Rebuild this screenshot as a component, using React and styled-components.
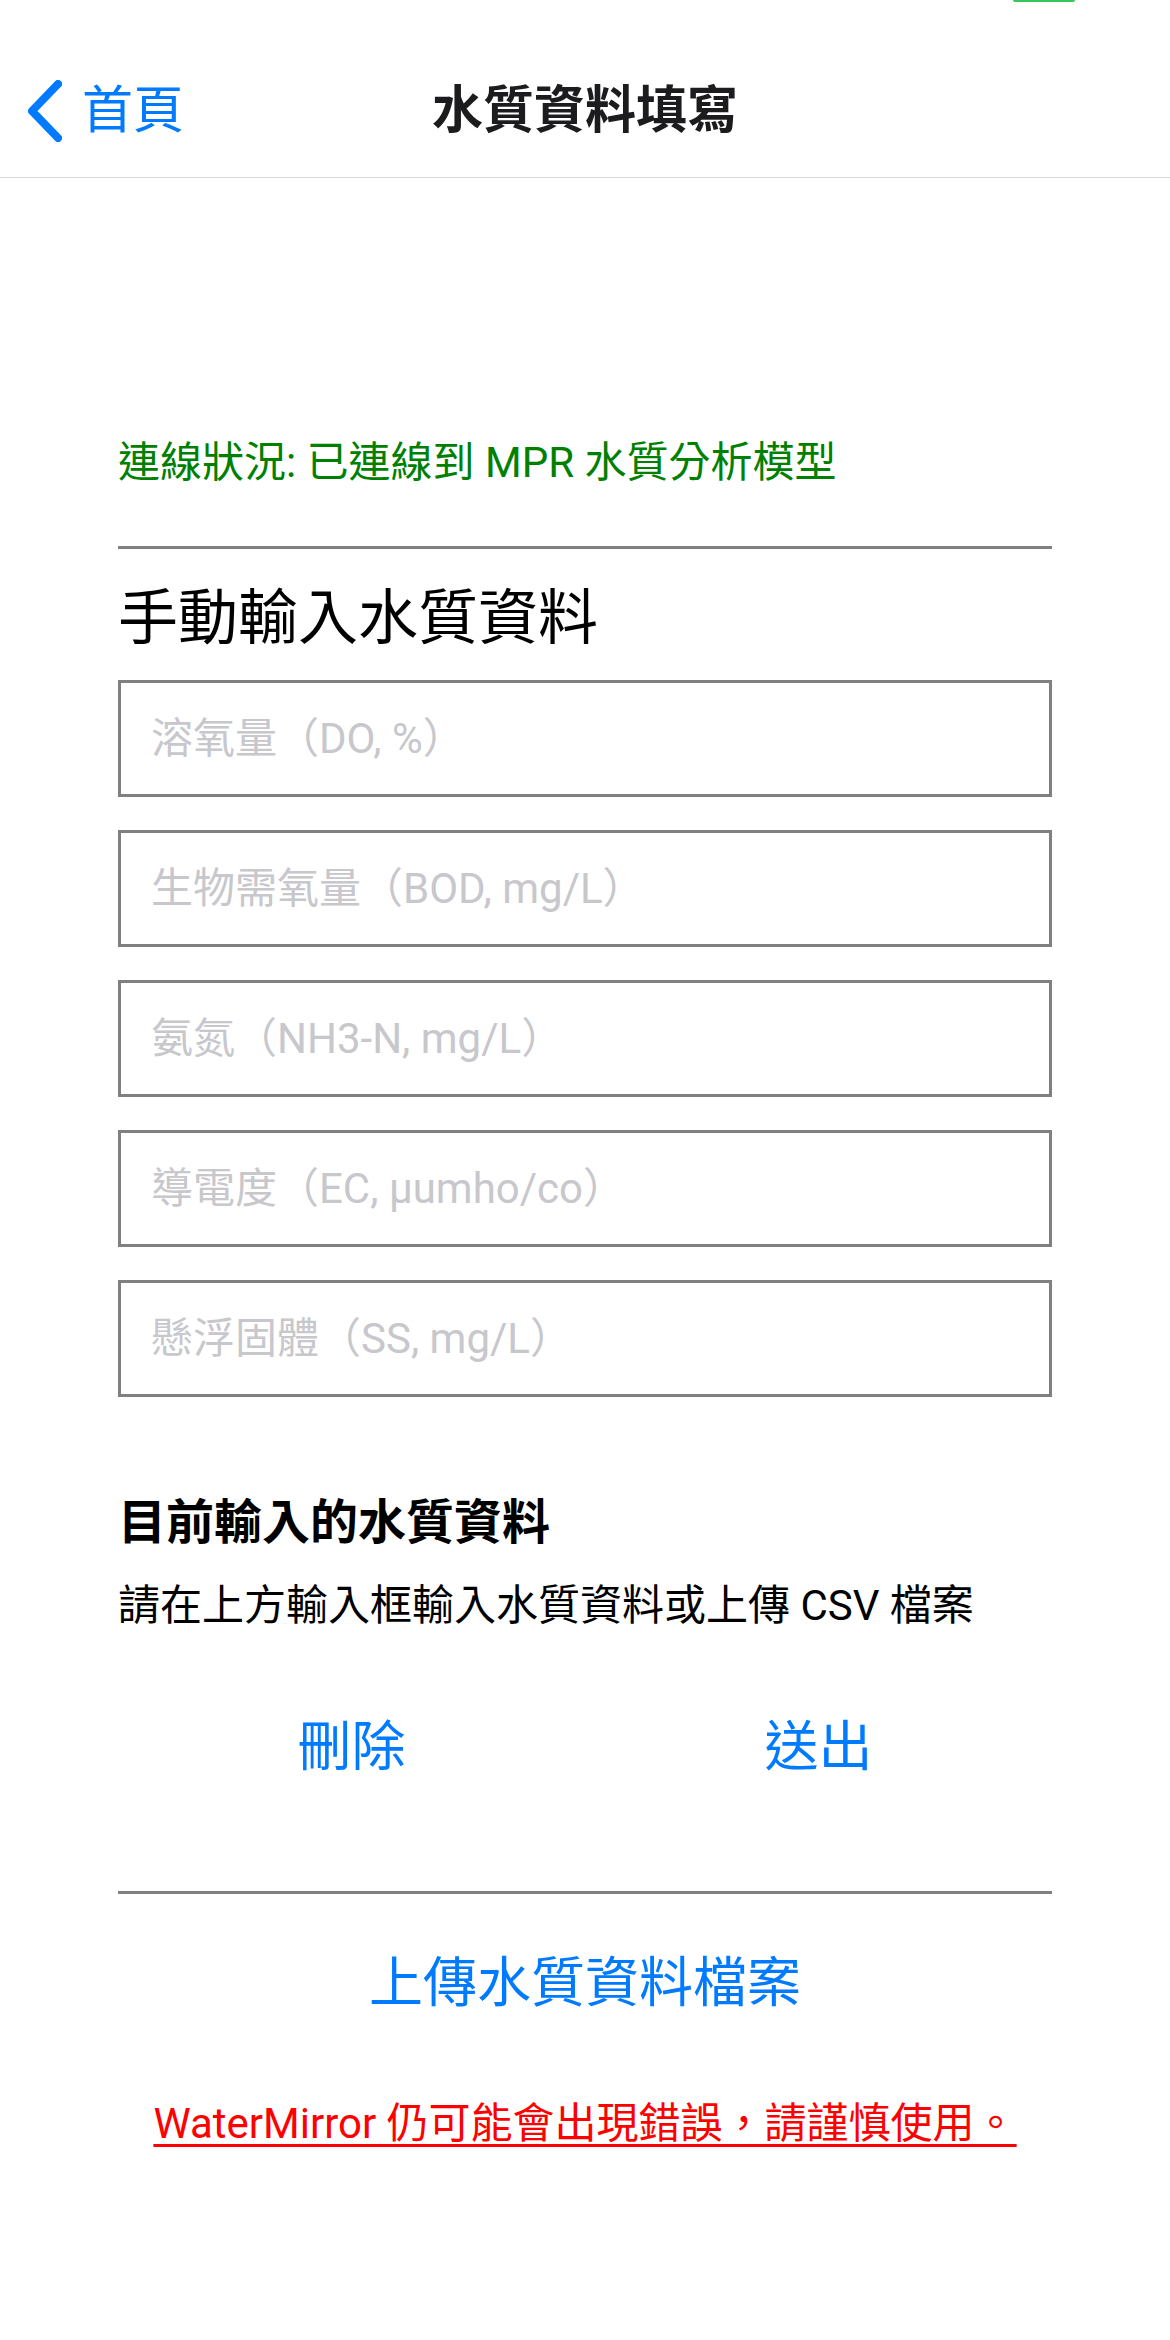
import React from 'react';
import styled, { createGlobalStyle } from 'styled-components';

const GlobalStyle = createGlobalStyle`
body {
  margin: 0;
  background: #ffffff;
  font-family: Roboto, "Noto Sans CJK TC", sans-serif;
}
`;

const Page = styled.div`
width: 1170px;
min-height: 2340px;
background: #ffffff;
`;

const Header = styled.header`
position: relative;
box-sizing: border-box;
height: 178px;
padding-top: 44px;
border-bottom: 1px solid #d9d9d9;
display: grid;
grid-template-columns: 1fr auto 1fr;
align-items: center;
`;

const BatteryTip = styled.div`
position: absolute;
top: 0;
right: 95px;
width: 62px;
height: 2px;
border-radius: 0 0 2px 2px;
background: #34c759;
`;

const BackButton = styled.button`
justify-self: start;
display: flex;
align-items: center;
gap: 20px;
margin: 0;
padding: 0 0 0 26px;
border: none;
background: none;
color: #007aff;
font-family: inherit;
font-size: 51px;
line-height: 62px;
`;

const Title = styled.h1`
margin: 0;
font-size: 51px;
font-weight: 700;
line-height: 62px;
color: #1c1c1e;
`;

const Content = styled.main`
padding: 0 118px;
display: flex;
flex-direction: column;
`;

const Status = styled.p`
margin: 255px 0 0;
font-size: 42px;
line-height: 60px;
color: #008000;
`;

const Divider = styled.hr`
margin: ${p => p.$top}px 0 0;
border: none;
height: 3px;
background: #808080;
`;

const Heading = styled.h2`
margin: 30px 0 0;
font-size: 60px;
font-weight: 400;
line-height: 80px;
color: #000000;
`;

const Fields = styled.div`
margin-top: 21px;
display: flex;
flex-direction: column;
gap: 33px;
`;

const Field = styled.input`
box-sizing: border-box;
width: 100%;
height: 117px;
margin: 0;
padding: 0 30px;
border: 3px solid #808080;
border-radius: 0;
outline: none;
background: #ffffff;
font-family: inherit;
font-size: 42px;
color: #000000;

&::placeholder {
  color: #c7c7cc;
}
`;

const SubHeading = styled.h3`
margin: 94px 0 0;
font-size: 48px;
font-weight: 700;
line-height: 64px;
color: #000000;
`;

const Hint = styled.p`
margin: 23px 0 0;
font-size: 42px;
line-height: 56px;
color: #000000;
`;

const ActionRow = styled.div`
margin-top: 79px;
display: flex;
`;

const LinkButton = styled.button`
flex: ${p => (p.$wide ? 'none' : '1')};
margin: 0;
padding: 0;
border: none;
background: none;
color: #007aff;
font-family: inherit;
font-size: 54px;
line-height: 70px;
text-align: center;
`;

const Upload = styled(LinkButton)`
margin-top: 55px;
align-self: center;
`;

const Warning = styled.a`
margin-top: 75px;
align-self: center;
font-size: 42px;
line-height: 60px;
color: #ff0000;
text-decoration: underline;
text-decoration-thickness: 3px;
text-underline-offset: 6px;
`;

const Chevron = () => (
  <svg width="36" height="62" viewBox="0 0 36 62" fill="none">
    <path d="M32 4 L6 31 L32 58" stroke="#007aff" strokeWidth="8" strokeLinecap="round" strokeLinejoin="round" />
  </svg>
);

const fields = [
  '溶氧量（DO, %）',
  '生物需氧量（BOD, mg/L）',
  '氨氮（NH3-N, mg/L）',
  '導電度（EC, µumho/co）',
  '懸浮固體（SS, mg/L）',
];

const App = () => (
  <Page>
    <GlobalStyle />
    <Header>
      <BatteryTip />
      <BackButton>
        <Chevron />
        首頁
      </BackButton>
      <Title>水質資料填寫</Title>
      <span />
    </Header>
    <Content>
      <Status>連線狀況: 已連線到 MPR 水質分析模型</Status>
      <Divider $top={53} />
      <Heading>手動輸入水質資料</Heading>
      <Fields>
        {fields.map(f => (
          <Field key={f} placeholder={f} />
        ))}
      </Fields>
      <SubHeading>目前輸入的水質資料</SubHeading>
      <Hint>請在上方輸入框輸入水質資料或上傳 CSV 檔案</Hint>
      <ActionRow>
        <LinkButton>刪除</LinkButton>
        <LinkButton>送出</LinkButton>
      </ActionRow>
      <Divider $top={108} />
      <Upload $wide>上傳水質資料檔案</Upload>
      <Warning>WaterMirror 仍可能會出現錯誤，請謹慎使用。</Warning>
    </Content>
  </Page>
);

export default App;
